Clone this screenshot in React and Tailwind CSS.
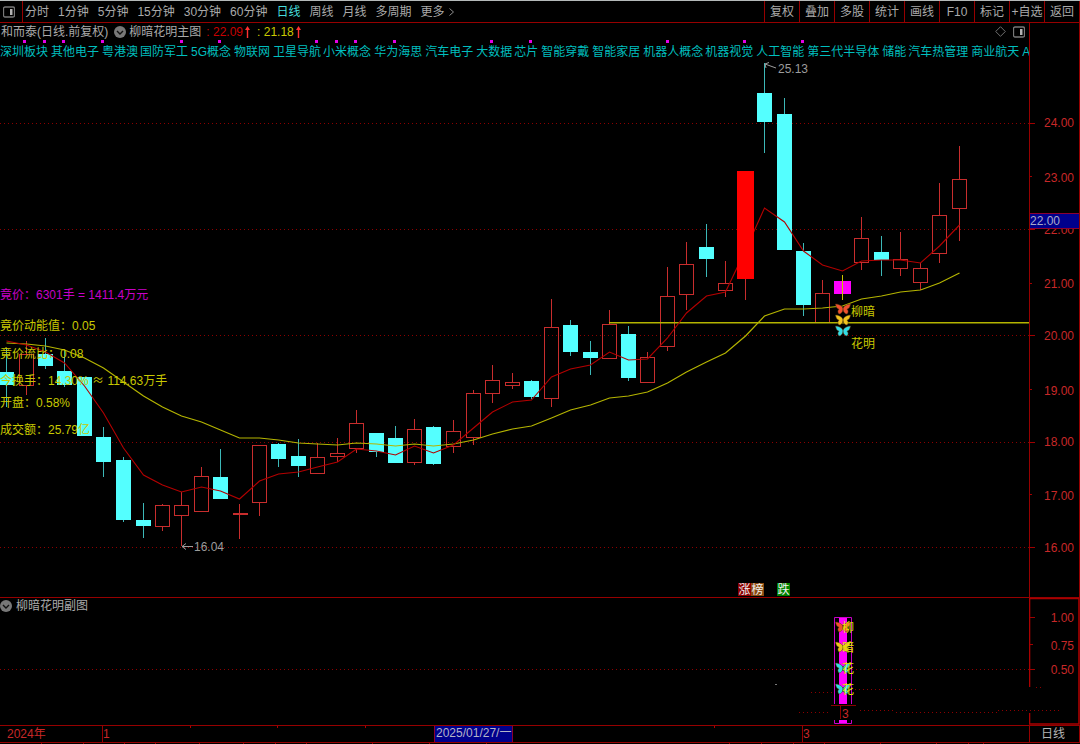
import React from 'react';

const PERIODS = ['分时', '1分钟', '5分钟', '15分钟', '30分钟', '60分钟', '日线', '周线', '月线', '多周期'];
const TOOLS = ['复权', '叠加', '多股', '统计', '画线', 'F10', '标记', '+自选', '返回'];
const CONCEPTS = [
  '深圳板块', '其他电子', '粤港澳', '国防军工', '5G概念', '物联网', '卫星导航', '小米概念', '华为海思',
  '汽车电子', '大数据', '芯片', '智能穿戴', '智能家居', '机器人概念', '机器视觉', '人工智能', '第三代半导体',
  '储能', '汽车热管理', '商业航天', 'A',
];

// type, x, body top, body bottom, high, low
const CANDLES = [
  ['down', 6, 372, 385, 348, 407],
  ['up', 26, 354, 385, 341, 395],
  ['down', 45, 354, 366, 338, 369],
  ['down', 64, 371, 385, 350, 387],
  ['down', 84, 377, 436, 377, 436],
  ['down', 103, 437, 462, 427, 477],
  ['down', 123, 460, 520, 457, 522],
  ['down', 143, 520, 526, 503, 538],
  ['up', 162, 505, 526, 504, 531],
  ['up', 181, 505, 515, 492, 546],
  ['up', 201, 476, 511, 467, 511],
  ['down', 220, 477, 499, 449, 499],
  ['up', 239, 514, 514, 504, 539],
  ['up', 259, 445, 502, 445, 516],
  ['down', 278, 444, 459, 443, 467],
  ['down', 298, 456, 466, 439, 477],
  ['up', 317, 457, 473, 443, 473],
  ['up', 337, 453, 456, 438, 462],
  ['up', 356, 423, 448, 410, 453],
  ['down', 376, 433, 452, 433, 457],
  ['down', 395, 438, 463, 426, 463],
  ['up', 414, 429, 462, 419, 465],
  ['down', 433, 427, 464, 426, 465],
  ['up', 453, 431, 446, 420, 453],
  ['up', 473, 393, 437, 390, 445],
  ['up', 492, 380, 393, 365, 403],
  ['up', 512, 382, 385, 373, 389],
  ['down', 531, 381, 397, 380, 399],
  ['up', 551, 327, 398, 299, 407],
  ['down', 570, 325, 352, 320, 356],
  ['down', 590, 352, 358, 341, 375],
  ['up', 609, 324, 358, 310, 358],
  ['down', 628, 334, 378, 326, 381],
  ['up', 647, 357, 382, 352, 382],
  ['up', 667, 296, 346, 267, 351],
  ['up', 686, 264, 294, 242, 310],
  ['down', 706, 247, 259, 224, 277],
  ['up', 725, 283, 290, 261, 297],
  ['limit', 745, 171, 279, 171, 300],
  ['down', 764, 93, 122, 63, 153],
  ['down', 784, 114, 250, 98, 250],
  ['down', 803, 251, 305, 243, 316],
  ['up', 822, 293, 322, 280, 322],
  ['signal', 842, 281, 294, 275, 300],
  ['up', 861, 238, 262, 217, 270],
  ['down', 881, 252, 260, 236, 276],
  ['up', 900, 259, 268, 232, 276],
  ['up', 920, 268, 282, 263, 290],
  ['up', 939, 215, 253, 183, 263],
  ['up', 959, 179, 208, 146, 241],
];

const MA_FAST = [
  341, 345, 352, 363, 386, 413, 448, 475, 485, 492, 487, 491, 499, 481, 474, 472, 467, 462, 449, 451, 455, 446,
  453, 445, 428, 412, 402, 400, 377, 369, 365, 352, 360, 359, 338, 313, 296, 292, 250, 208, 222, 251, 265, 271,
  261, 260, 260, 263, 246, 225,
];
const MA_SLOW = [
  343, 344, 346, 350, 358, 368, 382, 396, 407, 416, 422, 430, 438, 438, 440, 443, 444, 445, 443, 444, 446, 444,
  446, 444, 440, 434, 429, 426, 418, 410, 405, 398, 396, 392, 383, 372, 362, 353, 336, 316, 309, 309, 308, 306,
  299, 296, 292, 290, 283, 273,
];

const GRID = [123, 229, 335, 442, 547];
// label, tick y, text baseline
const PRICES = [
  ['24.00', 123, 127], ['23.00', 176, 182], ['22.00', 229, 234], ['21.00', 283, 288], ['20.00', 335, 340],
  ['19.00', 389, 395], ['18.00', 442, 446], ['17.00', 494, 500], ['16.00', 547, 552],
];
const DOTS = [24, 44, 63, 102, 181, 219, 316, 336, 355, 394, 491, 530, 667, 744, 802];
const READOUTS = [
  ['竟价动能值：0.05', 330],
  ['竟价流比：0.08', 358],
  ['开盘：0.58%', 407],
  ['成交额：25.79亿', 434],
];
const TAGS = [
  ['涨', 738, '#8c0000'],
  ['榜', 751, '#8a4a10'],
  ['跌', 777, '#008200'],
];

const linePoints = ys => ys.map((y, i) => `${CANDLES[i][1] + 0.5},${y}`).join(' ');

function Candle({ type, x, top, bottom, high, low }) {
  const c = x + 0.5;
  if (type === 'up') {
    return (
      <g stroke="#c82d2d" fill="none">
        {high < top && <line x1={c} x2={c} y1={high} y2={top} />}
        {low > bottom && <line x1={c} x2={c} y1={bottom} y2={low} />}
        {top === bottom ? (
          <line x1={c - 7} x2={c + 8} y1={top} y2={top} strokeWidth="2" />
        ) : (
          <rect x={c - 7} y={top + 0.5} width="14" height={bottom - top} />
        )}
      </g>
    );
  }
  if (type === 'signal') {
    return (
      <g>
        <rect x={c - 8.5} y={top} width="17" height={bottom - top} fill="#ff00ff" />
        <line x1={c} x2={c} y1={high} y2={low} stroke="#c8c800" />
      </g>
    );
  }
  const limit = type === 'limit';
  return (
    <g>
      <line x1={c} x2={c} y1={high} y2={low} stroke={limit ? '#c82d2d' : '#3cb8b8'} />
      <rect
        x={limit ? c - 8.5 : c - 7.5}
        y={top}
        width={limit ? 17 : 15}
        height={bottom - top}
        fill={limit ? '#ff0000' : '#54ffff'}
      />
    </g>
  );
}

function Butterfly({ x, y, color }) {
  return (
    <g transform={`translate(${x} ${y})`}>
      <path
        d="M0-1C-2-4-5-5-7.5-5C-7-2-6-.5-4 .3C-5.5 1.5-5.5 3.5-4 5C-2 5-.8 3 0 1.5C.8 3 2 5 4 5C5.5 3.5 5.5 1.5 4 .3C6-.5 7-2 7.5-5C5-5 2-4 0-1Z"
        fill={color}
        stroke="#5a3c14"
        strokeWidth="0.5"
      />
      <path d="M0-2V3" stroke="#3c2810" strokeWidth="0.8" />
    </g>
  );
}

function PanelIcon() {
  return (
    <svg className="h-3 w-3" viewBox="0 0 12 12" fill="none" aria-hidden="true">
      <rect x="0.5" y="1" width="11" height="10" rx="1.5" stroke="#787878" strokeWidth="1.3" />
      <rect x="7" y="3" width="2.5" height="6" fill="#b4b4b4" />
    </svg>
  );
}

function Collapse({ label }) {
  return (
    <button type="button" aria-label={label} className="shrink-0">
      <svg className="h-3 w-3" viewBox="0 0 12 12" fill="none" aria-hidden="true">
        <circle cx="6" cy="6" r="6" fill="#787878" />
        <path d="M3 5l3 3 3-3" stroke="#111" strokeWidth="1.4" />
      </svg>
    </button>
  );
}

function UpArrow() {
  return (
    <svg className="h-3 w-[5px]" viewBox="0 0 5 12" aria-hidden="true">
      <path d="M2.5 0L5 4H3.2V12H1.8V4H0Z" fill="#ff3232" />
    </svg>
  );
}

function Toolbar() {
  return (
    <header className="flex h-[23px] items-stretch border-t border-b border-t-[#b4b9b9] border-b-[#960000] leading-none">
      <button type="button" aria-label="侧栏" className="flex w-[22px] items-center pl-[3px]">
        <PanelIcon />
      </button>
      <nav className="flex flex-1 items-center gap-[9px] border-l border-[#960000] pl-[2px] whitespace-nowrap">
        {PERIODS.map(p => (
          <button key={p} type="button" className={p === '日线' ? 'text-[#46dcdc]' : 'text-[#aaaaaa]'}>
            {p}
          </button>
        ))}
        <button type="button" className="flex items-center gap-1 text-[#aaaaaa]">
          更多
          <svg className="h-2 w-[5px]" viewBox="0 0 5 8" fill="none" aria-hidden="true">
            <path d="M0.5 0.5l4 3.5-4 3.5" stroke="#8c8c8c" />
          </svg>
        </button>
      </nav>
      <div className="flex border-r border-[#960000]">
        {TOOLS.map(t => (
          <button key={t} type="button" className="w-[35px] border-l border-[#960000] whitespace-nowrap text-[#aaaaaa]">
            {t}
          </button>
        ))}
      </div>
    </header>
  );
}

function MainPlot() {
  return (
    <svg className="block h-[537px] w-full" viewBox="0 60 1029 537" preserveAspectRatio="xMaxYMin meet">
      <g stroke="#8c0000" strokeDasharray="1 3" shapeRendering="crispEdges">
        {GRID.map(y => (
          <line key={y} x1="0" x2="1029" y1={y + 0.5} y2={y + 0.5} />
        ))}
      </g>
      <g shapeRendering="crispEdges">
        {CANDLES.map(([type, x, top, bottom, high, low]) => (
          <Candle key={x} type={type} x={x} top={top} bottom={bottom} high={high} low={low} />
        ))}
      </g>
      <rect x="609" y="322" width="420" height="1.5" fill="#b4b400" />
      <polyline points={linePoints(MA_SLOW)} fill="none" stroke="#b4b400" strokeWidth="1.2" />
      <polyline points={linePoints(MA_FAST)} fill="none" stroke="#b40000" strokeWidth="1.1" />
      <rect x="737" y="171" width="17" height="108" fill="#ff0000" />

      <g fontSize="12">
        <text x="0" y="299" fill="#c800c8">竟价：6301手 = 1411.4万元</text>
        <g fill="#c8c800">
          {READOUTS.map(([text, y]) => (
            <text key={text} x="0" y={y}>{text}</text>
          ))}
          <text x="0" y="385">
            今换手：14.30% <tspan className="font-['Noto_Sans_CJK_SC',sans-serif]">≈</tspan> 114.63万手
          </text>
          <text x="851" y="316">柳暗</text>
          <text x="851" y="348">花明</text>
        </g>
        <text x="778" y="73" fill="#9c9c9c">25.13</text>
        <text x="194" y="551" fill="#9c9c9c">16.04</text>
      </g>
      <g stroke="#9c9c9c" fill="none">
        <path d="M776 68L765 64M769 62.5L765 64L766 68" />
        <path d="M193 546.5H182M186 543.5L182 546.5L186 549.5" />
      </g>

      <Butterfly x={843} y={309} color="#f0502d" />
      <Butterfly x={843} y={320} color="#f0c31e" />
      <Butterfly x={843} y={331} color="#32dce6" />

      {TAGS.map(([text, x, fill]) => (
        <g key={text}>
          <rect x={x} y="583" width="13" height="13" fill={fill} />
          <text x={x + 0.5} y="594" fontSize="12" fill="#f0f0f0">{text}</text>
        </g>
      ))}
    </svg>
  );
}

function PriceAxis() {
  return (
    <svg className="block h-[537px] w-full" viewBox="1030 60 49 537" preserveAspectRatio="xMinYMin meet">
      {PRICES.map(([label, y, baseline], i) => (
        <g key={label}>
          <path d={`M1030 ${y + 0.5}h${i % 2 ? 2 : 5}`} stroke="#a00000" />
          <text x="1074" y={baseline} textAnchor="end" fontSize="12" fill="#c82828">{label}</text>
        </g>
      ))}
      <rect x="1029.5" y="213.5" width="50" height="15" fill="#00008c" stroke="#8b0032" />
      <text x="1030" y="225" fontSize="12" fill="#aaaac8">22.00</text>
    </svg>
  );
}

function MainPanel() {
  return (
    <section className="flex">
      <div className="min-w-0 flex-1">
        <div className="flex h-[17px] items-center pl-px leading-none whitespace-nowrap text-[#aaaaaa]">
          <h1>和而泰(日线.前复权)</h1>
          <div className="flex items-center gap-[3px] pl-[6px]">
            <Collapse label="主图指标" />
            <span>柳暗花明主图</span>
          </div>
          <div className="flex items-center gap-[2px] pl-[5px] text-[#c80000]">
            : 22.09
            <UpArrow />
          </div>
          <div className="flex items-center gap-[2px] pl-[7px] text-[#c8c800]">
            : 21.18
            <UpArrow />
          </div>
          <div className="ml-auto flex items-center gap-[7px] pr-1">
            <svg className="h-[11px] w-[11px]" viewBox="0 0 11 11" fill="none" aria-hidden="true">
              <path d="M5.5 0.7L10.3 5.5L5.5 10.3L0.7 5.5Z" stroke="#6e6e6e" />
            </svg>
            <PanelIcon />
          </div>
        </div>
        <svg className="block h-[3px] w-full" viewBox="0 0 1029 3" preserveAspectRatio="xMaxYMin meet">
          {DOTS.map(x => (
            <rect key={x} x={x - 1} y="0" width="3" height="3" fill="#e600e6" />
          ))}
        </svg>
        <ul className="flex h-[17px] items-center gap-[3px] overflow-hidden leading-none whitespace-nowrap text-[#00bebe]">
          {CONCEPTS.map(c => (
            <li key={c} className="shrink-0 nth-[4n]:-ml-px">{c}</li>
          ))}
        </ul>
        <MainPlot />
      </div>
      <div className="w-[51px] border-x border-[#960000] pt-[37px]">
        <PriceAxis />
      </div>
    </section>
  );
}

const SUB_MARKS = [
  ['柳', 627, '#f0502d'],
  ['暗', 647, '#f0c31e'],
  ['花', 668, '#32dce6'],
  ['花', 689, '#32dce6'],
];

function SubPanel() {
  return (
    <section className="flex border-t border-[#960000]">
      <div className="min-w-0 flex-1">
        <div className="flex h-[15px] items-center gap-1 leading-none text-[#aaaaaa]">
          <Collapse label="副图指标" />
          <h2>柳暗花明副图</h2>
        </div>
        <svg className="block h-28 w-full" viewBox="0 613 1029 112" preserveAspectRatio="xMaxYMin meet">
          <path
            d="M0 669.5H1029M811 692.5H835M855 689.5H917M799 712.5H830M860 710.5H896M896 712.5H997M998 710.5H1029"
            stroke="#8c0000"
            strokeDasharray="1 3"
            shapeRendering="crispEdges"
          />
          <rect x="834.5" y="617.5" width="17" height="87" fill="#000" />
          <path d="M834.5 704V617.5H851.5V704M834.5 720V723.5H851.5V720" stroke="#c800c8" fill="none" />
          <rect x="839" y="618" width="8" height="86" fill="#ff00ff" />
          <rect x="839" y="720" width="8" height="3" fill="#ff00ff" />
          {SUB_MARKS.map(([text, y, color]) => (
            <g key={y}>
              <Butterfly x={843} y={y} color={color} />
              <text x="842" y={y + 5} fontSize="12" fill="#e6e600">{text}</text>
            </g>
          ))}
          <path d="M831 705.5H856M840.5 706V719" stroke="#8b0000" />
          <text x="842" y="718" fontSize="12" fill="#c82828">3</text>
          <path d="M775 684.5h2" stroke="#787878" />
        </svg>
      </div>
      <div className="w-[51px]">
        <svg className="block h-[127px] w-full" viewBox="1029 598 51 127" preserveAspectRatio="xMinYMin meet">
          <path d="M1029.5 687V598.5H1079V724H1029.5V713" stroke="#aa0000" strokeWidth="1.6" fill="none" />
          <path d="M1030 617.5h5M1030 644.5h3M1030 669.5h5" stroke="#a00000" />
          <path d="M1030 710.5H1061M1036 687.5H1042" stroke="#8c0000" strokeDasharray="1 3" />
          <g fontSize="12" fill="#c82828" textAnchor="end">
            <text x="1074" y="622">1.00</text>
            <text x="1074" y="650">0.75</text>
            <text x="1074" y="674">0.50</text>
          </g>
        </svg>
      </div>
    </section>
  );
}

function TimeAxis() {
  return (
    <footer className="border-t border-[#960000]">
      <div className="flex h-4">
        <svg className="block h-4 min-w-0 flex-1" viewBox="0 726 1029 16" preserveAspectRatio="xMaxYMin meet">
          <path d="M102.5 726V742M802.5 726V742" stroke="#960000" />
          <path d="M190.5 726V728M277.5 726V728M365.5 726V728M714.5 726V728" stroke="#aa0000" />
          <rect x="434.5" y="725.5" width="78" height="17" fill="#00008c" stroke="#8b0032" />
          <g fontSize="12" fill="#c82828">
            <text x="7" y="738">2024年</text>
            <text x="103" y="738">1</text>
            <text x="803" y="738">3</text>
          </g>
          <text x="436" y="737" fontSize="12" fill="#b4b4c8">2025/01/27/一</text>
        </svg>
        <button type="button" className="w-[51px] border-x border-[#960000] pr-[3px] leading-none text-[#b4b4b4]">
          日线
        </button>
      </div>
      <svg className="block h-[2px] w-full" viewBox="0 742 1080 2" preserveAspectRatio="xMinYMin slice">
        <path d="M0 742.5H1080" stroke="#960000" />
        <path
          d="M41.5 743v1M83.5 743v1M124.5 743v1M155.5 743v1M199.5 743v1M243.5 743v1M275.5 743v1M306.5 743v1M372.5 743v1M429.5 743v1M486.5 743v1M729.5 743v1M761.5 743v1M793.5 743v1M824.5 743v1M880.5 743v1M936.5 743v1M968.5 743v1M983.5 743v1"
          stroke="#960000"
        />
      </svg>
    </footer>
  );
}

export default function App() {
  return (
    <main className="min-h-screen bg-black font-['Liberation_Sans','Noto_Sans_CJK_SC',sans-serif] text-[12px]">
      <Toolbar />
      <MainPanel />
      <SubPanel />
      <TimeAxis />
    </main>
  );
}
